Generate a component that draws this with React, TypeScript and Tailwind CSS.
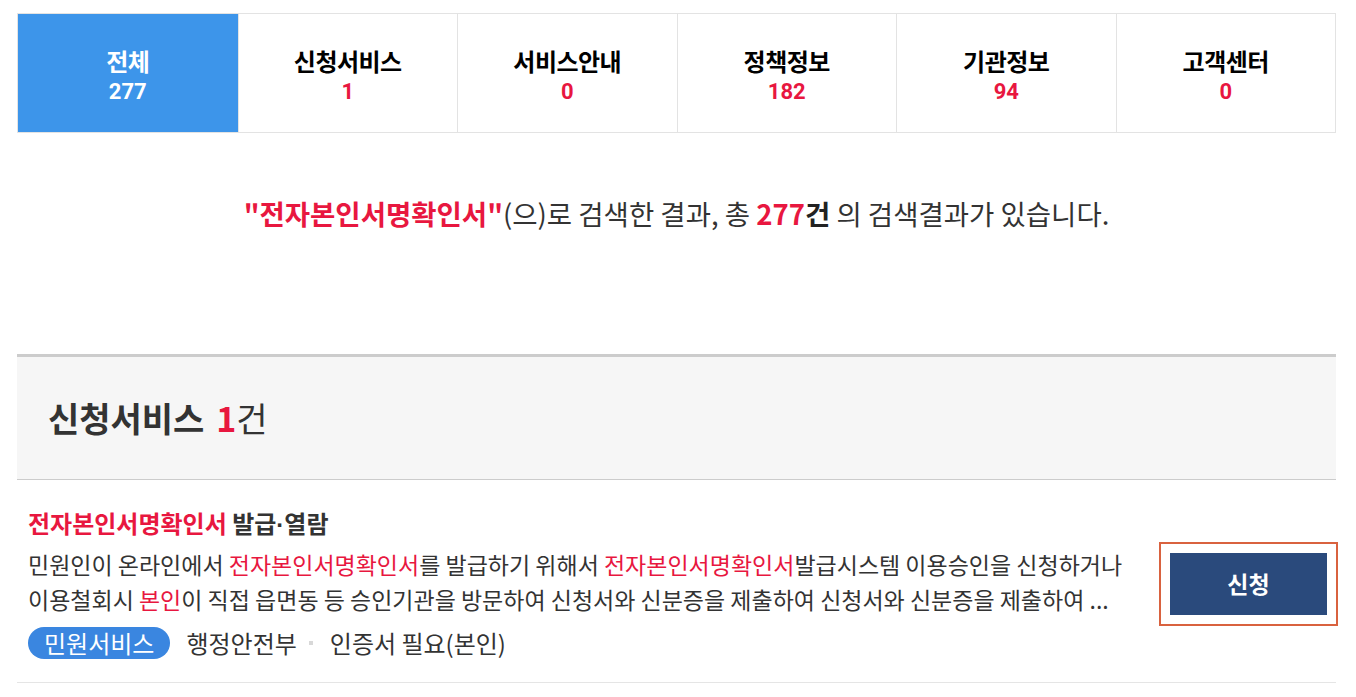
const tabs = [
  { label: '전체', count: 277 },
  { label: '신청서비스', count: 1 },
  { label: '서비스안내', count: 0 },
  { label: '정책정보', count: 182 },
  { label: '기관정보', count: 94 },
  { label: '고객센터', count: 0 },
];

const KW = '전자본인서명확인서';

export default function App() {
  return (
    <div className="min-h-screen bg-white font-['Noto_Sans_CJK_KR','Noto_Sans',sans-serif] text-[#333]">
      <div className="pl-[17px] pr-[20px] pt-[13px]">
        {/* tabs */}
        <ul className="grid grid-cols-6 border border-[#e3e3e3]">
          {tabs.map((t, i) => (
            <li
              key={t.label}
              className={
                i === 0
                  ? 'h-[118px] pt-[6px] flex flex-col items-center justify-center bg-[#3d95ea] text-white'
                  : 'h-[118px] pt-[6px] flex flex-col items-center justify-center border-l border-[#e3e3e3] text-black'
              }
            >
              <span className="text-[24px] font-bold leading-[31px] tracking-[-0.5px]">{t.label}</span>
              <span
                className={
                  i === 0
                    ? "font-['Roboto',sans-serif] text-[22px] font-bold leading-[31px] text-white"
                    : "font-['Roboto',sans-serif] text-[22px] font-bold leading-[31px] text-[#e8173f]"
                }
              >
                {t.count}
              </span>
            </li>
          ))}
        </ul>

        {/* summary */}
        <p className="mt-[62px] text-center text-[27.5px] leading-[36px] text-[#333]">
          <strong className="text-[#e8173f]">"{KW}"</strong>(으)로 검색한 결과, 총{' '}
          <strong className="text-[#e8173f]">277</strong>
          <strong className="text-[#222]">건</strong> 의 검색결과가 있습니다.
        </p>

        {/* section */}
        <section className="mt-[123px]">
          <div className="h-[126px] flex items-center border-t-[3px] border-b border-t-[#cccccc] border-b-[#cccccc] bg-[#f6f6f6] pl-[31px]">
            <h2 className="text-[34px] font-bold leading-[40px] text-[#333]">
              신청서비스 <span className="text-[#e8173f] ml-1">1</span>
              <span className="font-normal">건</span>
            </h2>
          </div>

          <div className="flex items-center border-b border-[#e5e5e5] pl-[11px] pt-[28px] pb-[23px]">
            <div className="flex-1">
              <h3 className="text-[24px] font-bold leading-[30px] text-[#333]">
                <span className="text-[#e8173f]">{KW}</span> 발급
                <span className="font-['Liberation_Sans',sans-serif]">·</span>열람
              </h3>
              <p className="mt-[7px] text-[23px] leading-[35px] text-[#333] whitespace-nowrap">
                민원인이 온라인에서 <span className="text-[#e8173f]">{KW}</span>를 발급하기 위해서{' '}
                <span className="text-[#e8173f]">{KW}</span>발급시스템 이용승인을 신청하거나
                <br />
                이용철회시 <span className="text-[#e8173f]">본인</span>이 직접 읍면동 등 승인기관을 방문하여 신청서와 신분증을
                제출하여 신청서와 신분증을 제출하여 ...
              </p>
              <div className="mt-[10px] flex items-center text-[24px] leading-[30px] text-[#333]">
                <span className="h-[32px] flex items-center rounded-full bg-[#3a86e0] px-[16px] text-white">민원서비스</span>
                <span className="ml-[16px]">행정안전부</span>
                <span className="ml-[12px] mr-[17px] w-[4px] h-[4px] bg-[#d8d8d8]" />
                <span>인증서 필요(본인)</span>
              </div>
            </div>
            <div className="ml-4 mr-[-2px] border-2 border-[#d9623f] p-[9px]">
              <button className="w-[157px] h-[62px] bg-[#2a4a7c] text-[23px] font-bold text-white">신청</button>
            </div>
          </div>
        </section>
      </div>
    </div>
  );
}
